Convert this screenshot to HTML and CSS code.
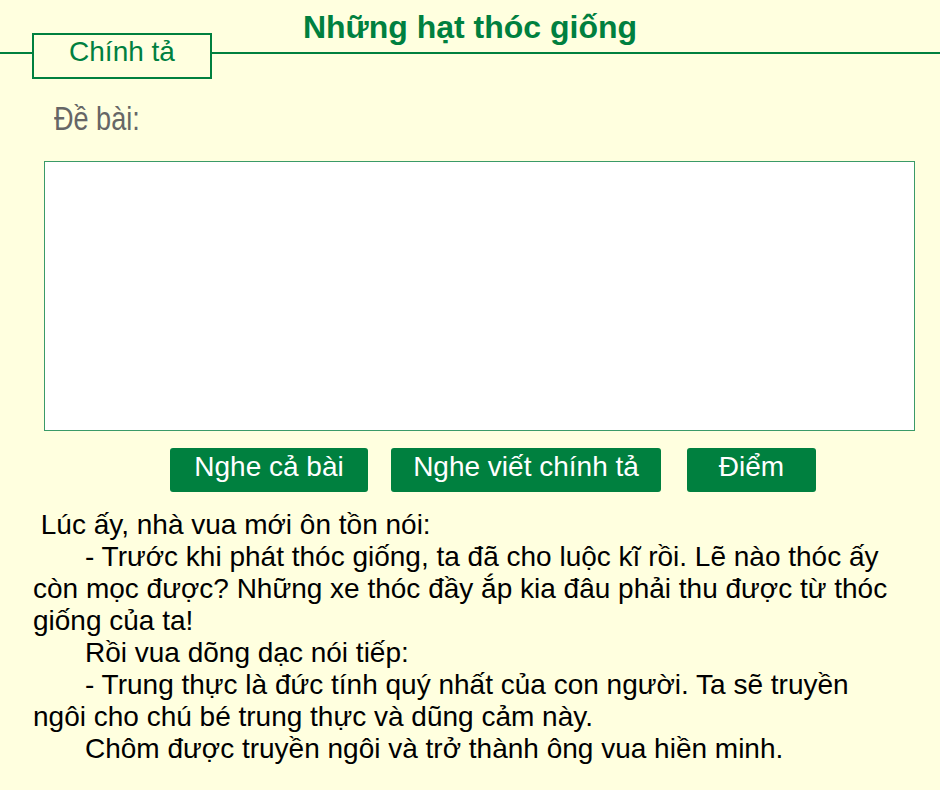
FILE: index.html
```
<!DOCTYPE html>
<html lang="vi">
<head>
<meta charset="utf-8">
<title>Những hạt thóc giống</title>
<link rel="stylesheet" href="styles.css">
</head>
<body>
<header class="banner">
  <h1 class="title">Những hạt thóc giống</h1>
</header>
<div class="tab">Chính tả</div>
<main class="lesson">
  <div class="prompt"><span class="prompt-text">Đề bài:</span></div>
  <textarea class="answer"></textarea>
  <div class="actions">
    <button class="btn btn-all">Nghe cả bài</button>
    <button class="btn btn-dict">Nghe viết chính tả</button>
    <button class="btn btn-score">Điểm</button>
  </div>
  <div class="passage">
    <p>&nbsp;Lúc ấy, nhà vua mới ôn tồn nói:</p>
    <p class="indent">- Trước khi phát thóc giống, ta đã cho luộc kĩ rồi. Lẽ nào thóc ấy còn mọc được? Những xe thóc đầy ắp kia đâu phải thu được từ thóc giống của ta!</p>
    <p class="indent">Rồi vua dõng dạc nói tiếp:</p>
    <p class="indent">- Trung thực là đức tính quý nhất của con người. Ta sẽ truyền ngôi cho chú bé trung thực và dũng cảm này.</p>
    <p class="indent">Chôm được truyền ngôi và trở thành ông vua hiền minh.</p>
  </div>
</main>
</body>
</html>
```
FILE: styles.css
```
html, body {
  margin: 0;
  padding: 0;
  background: #ffffdf;
}

body {
  width: 940px;
  height: 790px;
  overflow: hidden;
  font-family: "Liberation Sans", Arial, sans-serif;
}

/* header strip with the rule along its bottom edge */
.banner {
  height: 52px;
  border-bottom: 2px solid #00803f;
}

.title {
  margin: 0;
  padding-top: 7px;
  text-align: center;
  color: #00803f;
  font-weight: bold;
  font-size: 32px;
  line-height: 40px;
}

/* boxed tab that sits over the rule */
.tab {
  position: relative;
  box-sizing: border-box;
  width: 180px;
  height: 46px;
  margin: -21px 0 0 32px;
  border: 2px solid #00803f;
  background: #ffffdf;
  color: #00803f;
  text-align: center;
  font-size: 28px;
  line-height: 34px;
}

.lesson {
  padding: 0 25px 0 33px;
}

.prompt {
  height: 32px;
  margin: 24px 0 0 21px;
  color: #666;
  font-size: 33px;
  line-height: 32px;
}

/* narrow face for the label */
.prompt-text {
  display: inline-block;
  transform: scaleX(0.82);
  transform-origin: left center;
}

.answer {
  display: block;
  box-sizing: border-box;
  width: 871px;
  height: 270px;
  margin: 26px 0 0 11px;
  border: 1px solid #3a9a68;
  background: #fff;
  resize: none;
  outline: none;
}

.actions {
  display: flex;
  margin: 17px 0 0 137px;
  gap: 23px;
}

.btn {
  box-sizing: border-box;
  height: 44px;
  border: 0;
  border-radius: 3px;
  background: #00803f;
  color: #fff;
  font-family: "Liberation Sans", Arial, sans-serif;
  font-size: 28px;
  line-height: 37px;
  padding: 0 0 7px;
}

.btn-all { width: 198px; }
.btn-dict { width: 270px; }
.btn-score { width: 129px; margin-left: 3px; }

.passage {
  margin-top: 17px;
  width: 870px;
  font-size: 28px;
  line-height: 32px;
  color: #000;
}

.passage p {
  margin: 0;
}

.passage .indent {
  text-indent: 52px;
}
```
